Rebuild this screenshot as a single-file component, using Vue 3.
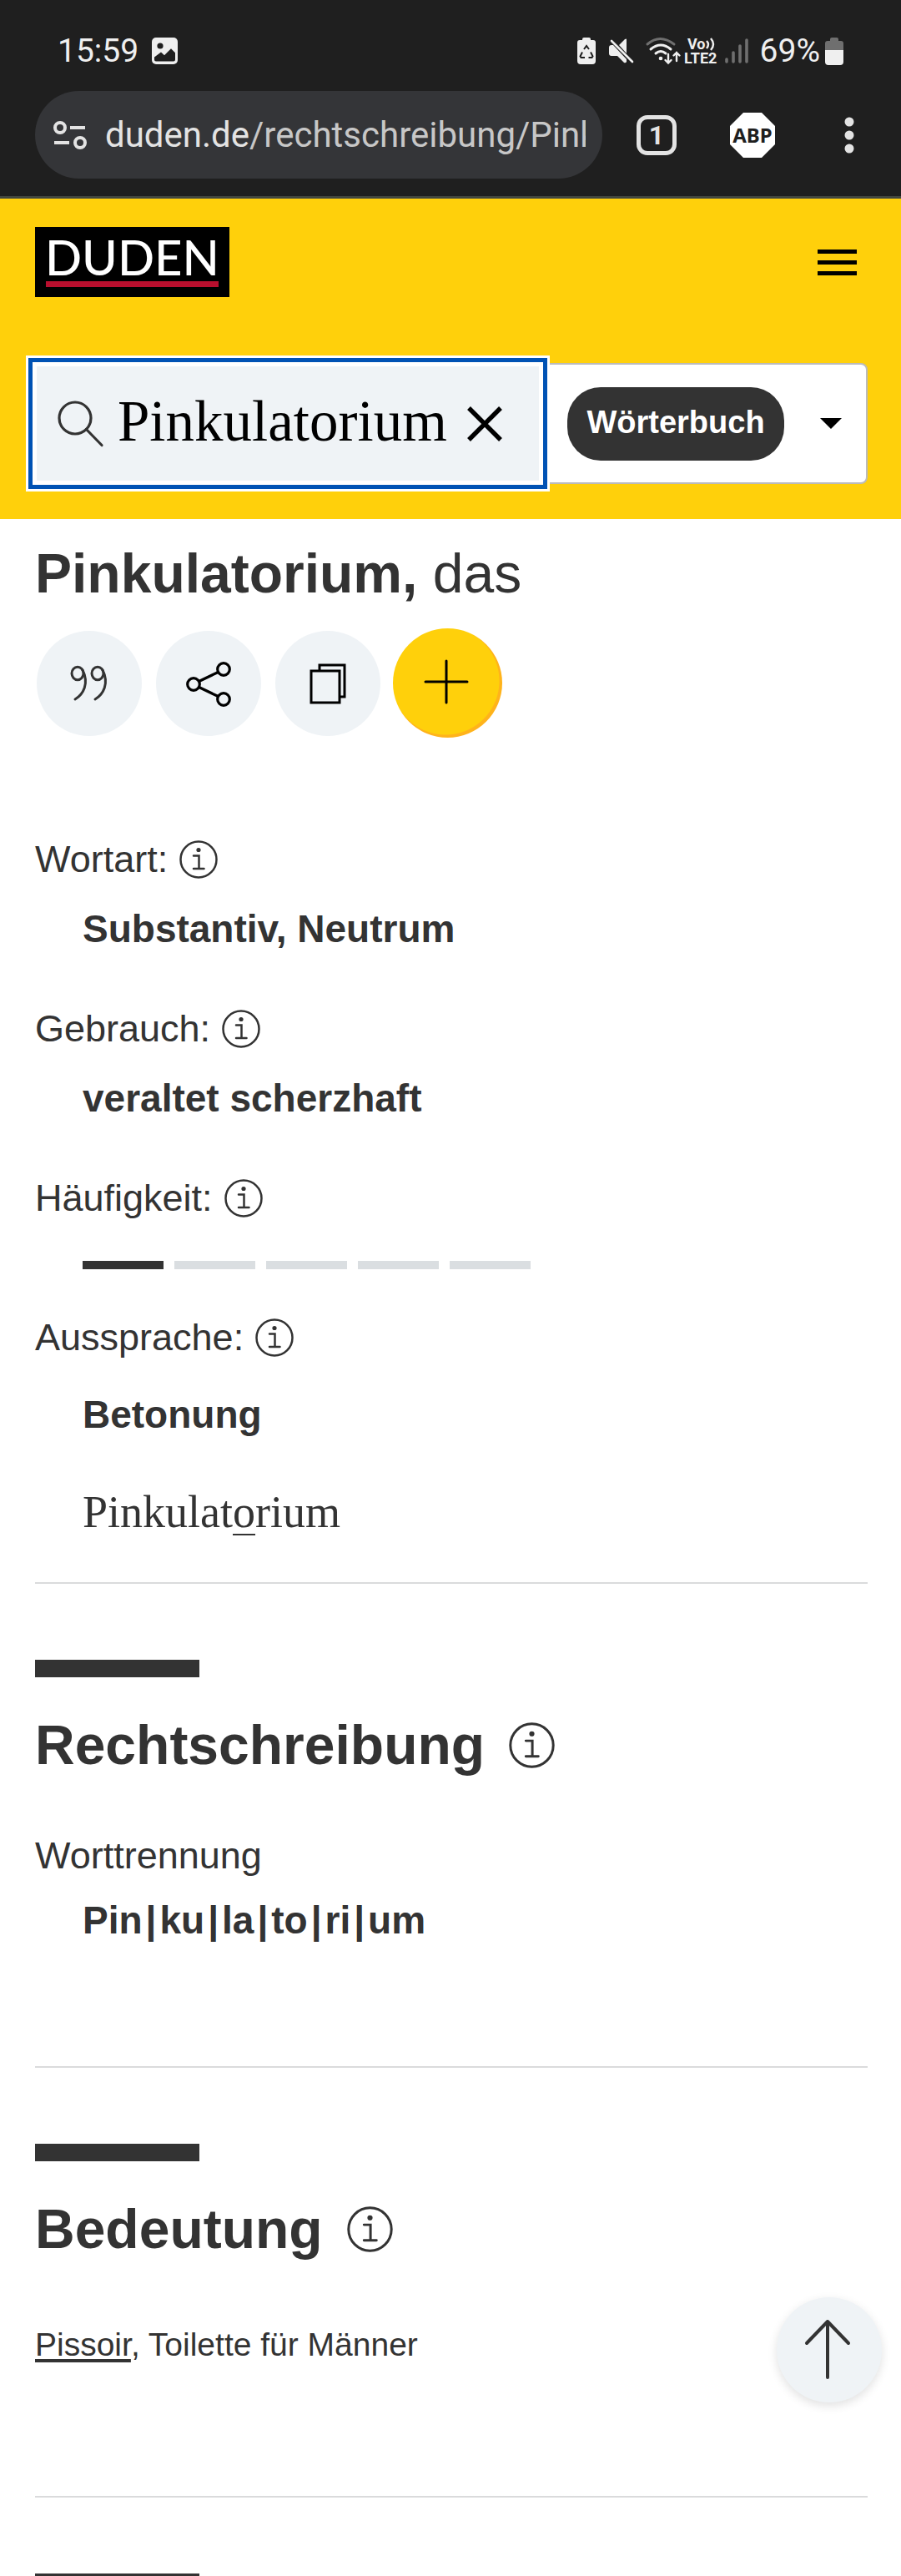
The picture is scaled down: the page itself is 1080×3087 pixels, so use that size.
<script setup>
import { ref } from 'vue'

const query = ref('Pinkulatorium')
const syllables = ['Pin', 'ku', 'la', 'to', 'ri', 'um']
const frequency = 1
</script>

<template>
  <div class="screen">
    <div class="chrome">
      <div class="status">
        <span class="clock">15:59</span>
        <svg class="photo" width="31" height="32" viewBox="0 0 31 32">
          <rect width="31" height="32" rx="5" fill="#efefef" />
          <circle cx="10" cy="10" r="3.6" fill="#1f1f1f" />
          <path d="M3 23.5l8-6 4 3.8 8-8 5 5v8.2q0 2-2 2H5q-2 0-2-2z" fill="#1f1f1f" />
        </svg>
        <div class="indicators">
          <svg width="22" height="32" viewBox="0 0 22 32">
            <path d="M6 3V2q0-2 2-2h6q2 0 2 2v1h3q3 0 3 3v22q0 4-4 4H4q-4 0-4-4V6q0-3 3-3z" fill="#efefef" />
            <path d="M8 14l3-4 3 4M16 17.500l2.500 5-1 1.500H13.500M9 24H4.500l-1-1.500 2.500-5" fill="none" stroke="#1f1f1f" stroke-width="2" />
          </svg>
          <svg class="mute" width="30" height="30" viewBox="0 0 30 30">
            <path d="M0 11q0-3 3-3h2l16 17v3q-1 2-3 1l-8-8H3q-3 0-3-3zM12 8l7-7q2-1 2 0v17z" fill="#efefef" />
            <path d="M3 3l25 25" stroke="#efefef" stroke-width="2.600" stroke-linecap="round" />
          </svg>
          <svg class="wifi" width="42" height="32" viewBox="0 0 42 32" fill="none" stroke-linecap="round">
            <path d="M2 8q15-13 32 0" stroke="#6f6f6f" stroke-width="3" />
            <path d="M6 14q12-10 24 0M12 19q6-5 12 0" stroke="#efefef" stroke-width="3" />
            <circle cx="18" cy="25" r="2.300" fill="#efefef" />
            <path d="M27 20v10M23.500 27l3.500 3.500 3.500-3.500M37 28V18M33.500 21.500L37 18l3.500 3.500" stroke="#efefef" stroke-width="2.400" />
          </svg>
          <svg class="volte" width="41" height="32" viewBox="0 0 41 32">
            <text x="4" y="14" class="tiny">Vo</text>
            <text x="0" y="31" class="tiny">LTE2</text>
            <path d="M27 4q4 4 0 9M32 1q6 7 0 14" fill="none" stroke="#efefef" stroke-width="2.400" />
          </svg>
          <svg class="signal" width="28" height="30" viewBox="0 0 28 30" stroke="#6f6f6f" stroke-width="3.600" stroke-linecap="round">
            <path d="M2 25v3M10 17v11M18 9v19M26 2v26" />
          </svg>
          <span class="percent">69%</span>
          <svg class="battery" width="22" height="33" viewBox="0 0 22 33">
            <path d="M6 4V2q0-2 2-2h6q2 0 2 2v2h3q3 0 3 3v9H0V7q0-3 3-3z" fill="#6f6f6f" />
            <path d="M0 15h22v14q0 4-4 4H4q-4 0-4-4z" fill="#efefef" />
          </svg>
        </div>
      </div>

      <div class="toolbar">
        <button class="address" type="button">
          <svg width="40" height="34" viewBox="0 0 40 34" fill="none" stroke="#e3e3e3" stroke-width="4">
            <circle cx="8" cy="8" r="6" />
            <circle cx="32" cy="26" r="6" />
            <path d="M20 8h18M1 26h18" />
          </svg>
          <span class="url"><b>duden.de</b>/rechtschreibung/Pink</span>
        </button>
        <button class="tabs" type="button" aria-label="Tabs">1</button>
        <button class="plain abp" type="button" aria-label="Adblock Plus">
          <svg width="54" height="54" viewBox="0 0 54 54">
            <path d="M16 0h22l16 16v22L38 54H16L0 38V16z" fill="#fff" />
            <text x="27" y="36" text-anchor="middle" class="abp-text">ABP</text>
          </svg>
        </button>
        <button class="plain more" type="button" aria-label="Menü">
          <svg width="12" height="44" viewBox="0 0 12 44" fill="#e3e3e3">
            <circle cx="6" cy="6" r="5.500" />
            <circle cx="6" cy="22" r="5.500" />
            <circle cx="6" cy="38" r="5.500" />
          </svg>
        </button>
      </div>
    </div>

    <header class="site-header">
      <div class="brand-row">
        <a class="logo" href="#">DUDEN</a>
        <button class="plain" type="button" aria-label="Navigation">
          <svg width="47" height="31" viewBox="0 0 47 31" fill="#000">
            <path d="M0 0h47v5H0zM0 13h47v5H0zM0 26h47v5H0z" />
          </svg>
        </button>
      </div>
      <form class="search" @submit.prevent>
        <div class="search-box">
          <svg class="lens" width="56" height="56" viewBox="0 0 56 56" fill="none" stroke="#333" stroke-width="3.200" stroke-linecap="round">
            <circle cx="21" cy="21" r="19" />
            <path d="M34.500 34.500L53 53.500" />
          </svg>
          <input v-model="query" type="text" aria-label="Suche">
          <button class="plain" type="button" aria-label="Löschen" @click="query = ''">
            <svg width="42" height="42" viewBox="0 0 42 42" stroke="#000" stroke-width="5.500">
              <path d="M2 2l38 38M40 2L2 40" />
            </svg>
          </button>
        </div>
        <label class="source">
          <select aria-label="Bereich"><option>Wörterbuch</option></select>
          <svg width="26" height="13" viewBox="0 0 26 13"><path d="M0 0h26L13 13z" /></svg>
        </label>
      </form>
    </header>

    <main>
      <h1>Pinkulatorium, <span>das</span></h1>
      <div class="actions">
        <button class="round" type="button" aria-label="Zitieren">
          <svg width="46" height="44" viewBox="0 0 46 44" fill="none" stroke="#333" stroke-width="3" stroke-linecap="round">
            <ellipse cx="9" cy="10" rx="7" ry="7.700" />
            <path d="M15 6c8 16 1 29-9 35" />
            <ellipse cx="33" cy="10" rx="7" ry="7.700" />
            <path d="M39 6c8 16 1 29-9 35" />
          </svg>
        </button>
        <button class="round" type="button" aria-label="Teilen">
          <svg width="54" height="54" viewBox="0 0 54 54" fill="none" stroke="#000" stroke-width="3.200">
            <circle cx="9" cy="28" r="7.300" />
            <circle cx="45" cy="10" r="7.300" />
            <circle cx="45" cy="46" r="7.300" />
            <path d="M15.500 24.500L38.500 13.500M15.500 31.500L38.500 42.500" />
          </svg>
        </button>
        <button class="round" type="button" aria-label="Kopieren">
          <svg width="44" height="50" viewBox="0 0 44 50" fill="none" stroke="#000" stroke-width="3">
            <path d="M2 10h34v38H2zM12 10V3h30v38h-6" />
          </svg>
        </button>
        <button class="round add" type="button" aria-label="Hinzufügen">
          <svg width="54" height="54" viewBox="0 0 54 54" stroke="#000" stroke-width="3" stroke-linecap="round">
            <path d="M27 2v50M2 27h50" />
          </svg>
        </button>
      </div>

      <dl>
        <dt>Wortart: <svg class="info" viewBox="0 0 46 46"><use href="#info" /></svg></dt>
        <dd>Substantiv, Neutrum</dd>
        <dt>Gebrauch: <svg class="info" viewBox="0 0 46 46"><use href="#info" /></svg></dt>
        <dd>veraltet scherzhaft</dd>
        <dt>Häufigkeit: <svg class="info" viewBox="0 0 46 46"><use href="#info" /></svg></dt>
        <dd class="frequency"><i v-for="n in 5" :key="n" :class="{ on: n <= frequency }"></i></dd>
        <dt>Aussprache: <svg class="info" viewBox="0 0 46 46"><use href="#info" /></svg></dt>
        <dd class="stress">Betonung</dd>
        <dd class="phonetic">Pinkulat<u>o</u>rium</dd>
      </dl>

      <section>
        <h2>Rechtschreibung <svg class="info" viewBox="0 0 46 46"><use href="#info" /></svg></h2>
        <dl class="hyphenation">
          <dt>Worttrennung</dt>
          <dd><template v-for="(s, i) in syllables" :key="s"><span v-if="i" class="sep">|</span>{{ s }}</template></dd>
        </dl>
      </section>

      <section>
        <h2>Bedeutung <svg class="info" viewBox="0 0 46 46"><use href="#info" /></svg></h2>
        <p><a href="#">Pissoir</a>, Toilette für Männer</p>
      </section>

      <section></section>
    </main>

    <button class="round to-top" type="button" aria-label="Nach oben">
      <svg width="54" height="72" viewBox="0 0 54 72" fill="none" stroke="#333" stroke-width="4" stroke-linecap="round" stroke-linejoin="round">
        <path d="M27 69V2M2 28L27 2l25 26" />
      </svg>
    </button>

    <svg width="0" height="0" class="defs">
      <symbol id="info" viewBox="0 0 46 46">
        <g fill="none" stroke="#333" stroke-width="2.500" stroke-linecap="round">
          <circle cx="23" cy="23" r="21.500" />
          <path d="M17 18.500h6.500V34M17 34h12.500" />
        </g>
        <circle cx="23" cy="11.500" r="2.600" fill="#333" />
      </symbol>
    </svg>
  </div>
</template>

<style>
body {
  background: #fff;
}
</style>

<style scoped>
.screen {
  max-height: 100vh;
  overflow: hidden;
  color: #333;
  font-family: "Liberation Sans", Arial, sans-serif;
}
button {
  box-sizing: border-box;
  padding: 0;
  border: 0;
  font: inherit;
  cursor: pointer;
}
svg {
  display: block;
  flex: none;
  overflow: visible;
}
.plain {
  background: none;
}
.defs {
  position: absolute;
}

/* Browser chrome */
.chrome {
  padding: 38px 0 21px;
  background: #1f1f1f;
  border-bottom: 3px solid #43473f;
  color: #efefef;
  font-family: Roboto, sans-serif;
}
.status {
  display: flex;
  align-items: center;
  height: 46px;
  padding: 0 69px;
}
.clock,
.percent {
  font-size: 39px;
  line-height: 46px;
}
.photo {
  margin-left: 16px;
}
.indicators {
  display: flex;
  align-items: center;
  margin-left: auto;
}
.mute {
  margin-left: 16px;
}
.wifi {
  margin-left: 14px;
}
.volte {
  margin-left: 4px;
}
.tiny {
  fill: #efefef;
  font: 700 18px Roboto, sans-serif;
}
.signal {
  margin-left: 8px;
}
.percent {
  margin-left: 14px;
}
.battery {
  margin-left: 6px;
}
.toolbar {
  display: flex;
  align-items: center;
  margin-top: 25px;
  padding: 0 56px 0 42px;
}
.address {
  display: flex;
  flex: 1;
  align-items: center;
  gap: 22px;
  min-width: 0;
  height: 105px;
  padding: 0 20px 0 22px;
  border-radius: 53px;
  background: #343538;
}
.url {
  overflow: hidden;
  color: #c7c7c7;
  font-size: 42px;
  line-height: 56px;
  white-space: nowrap;
}
.url b {
  color: #e3e3e3;
  font-weight: 400;
}
.tabs {
  width: 48px;
  height: 48px;
  margin-left: 41px;
  border: 5px solid #e3e3e3;
  border-radius: 13px;
  background: none;
  color: #e3e3e3;
  font-size: 32px;
  font-weight: 700;
  line-height: 38px;
}
.abp {
  margin-left: 64px;
}
.abp-text {
  fill: #1f1f1f;
  font: 700 24px "Noto Sans", sans-serif;
}
.more {
  margin-left: 83px;
}

/* Site header */
.site-header {
  padding: 34px 40px 42px;
  background: #ffd00b;
}
.brand-row {
  display: flex;
  align-items: center;
  justify-content: space-between;
  padding: 0 13px 0 2px;
}
.logo {
  box-sizing: border-box;
  height: 84px;
  padding: 6px 12px 12px;
  background: linear-gradient(#b80f2e, #b80f2e) 13px 65px / calc(100% - 26px) 7px no-repeat #000;
  color: #fff;
  font: 500 58px/60px Lato, sans-serif;
  text-decoration: none;
}
.search {
  display: flex;
  margin-top: 79px;
  padding: 2px;
  border: 2px solid #bbb;
  border-radius: 8px;
  background: #fff;
}
.search-box {
  display: flex;
  flex: 1;
  align-items: center;
  min-width: 0;
  height: 137px;
  padding: 0 44px 0 25px;
  box-sizing: border-box;
  background: #eff3f6;
  box-shadow: 0 0 0 5px #fff, 0 0 0 10px #0052b4, 0 0 0 13px #fff;
}
.search-box input {
  box-sizing: border-box;
  flex: 1;
  min-width: 0;
  height: 80px;
  padding: 0 0 4px 16px;
  border: 0;
  outline: 0;
  background: none;
  color: #000;
  font: 69px "Liberation Serif", serif;
}
.source {
  display: flex;
  align-items: center;
  padding: 0 27px 0 34px;
}
.source select {
  width: 260px;
  height: 88px;
  margin-right: 43px;
  padding: 0 0 4px;
  border: 0;
  border-radius: 40px;
  appearance: none;
  background: #333;
  color: #fff;
  font: 700 38px "Liberation Sans", Arial, sans-serif;
  text-align: center;
  text-align-last: center;
}

/* Entry */
main {
  padding: 25px 40px 0 42px;
}
h1,
h2 {
  margin: 0;
  font-size: 66px;
  line-height: 80px;
}
h1 span {
  font-weight: 400;
}
.actions {
  display: flex;
  align-items: center;
  gap: 17px;
  height: 131px;
  margin: 26px 2px 119px;
}
.round {
  display: flex;
  align-items: center;
  justify-content: center;
  width: 126px;
  height: 126px;
  border-radius: 50%;
  background: #eff3f6;
}
.add {
  width: 131px;
  height: 131px;
  margin-left: -2px;
  padding: 0 4px 4px 0;
  background: radial-gradient(circle at 63px 63px, #ffd00b 64px, #ffb31b 65px);
}
dl,
dd,
p {
  margin: 0;
}
dt,
dd {
  font-size: 45px;
  line-height: 54px;
}
dt {
  display: flex;
  align-items: center;
  gap: 14px;
}
dd {
  margin: 29px 0 66px 57px;
  font-size: 46px;
  font-weight: 700;
}
.info {
  width: 46px;
  height: 46px;
}
.frequency {
  display: flex;
  gap: 13px;
  margin: 48px 0 55px 57px;
}
.frequency i {
  width: 97px;
  height: 10px;
  background: #dadee1;
}
.frequency .on {
  background: #333;
}
.stress {
  margin: 38px 0 58px 57px;
}
.phonetic {
  margin: 0 0 52px 57px;
  font: 54px/64px "Liberation Serif", serif;
}
.phonetic u {
  text-decoration-thickness: 2px;
  text-underline-offset: 8px;
}
section {
  border-top: 2px solid #dadbdc;
}
section::before {
  display: block;
  width: 197px;
  height: 21px;
  margin: 91px 0 41px;
  background: #333;
  content: "";
}
h2 {
  display: flex;
  align-items: center;
  gap: 29px;
}
h2 .info {
  width: 55px;
  height: 55px;
}
.hyphenation {
  padding: 66px 0 148px;
}
.hyphenation dd {
  margin: 23px 0 0 57px;
}
.sep {
  padding: 0 4px;
}
p {
  padding: 72px 0 154px;
  font-size: 39px;
  line-height: 54px;
}
p a {
  color: inherit;
  text-decoration-thickness: 4px;
  text-underline-offset: 4px;
}
.to-top {
  position: fixed;
  right: 23px;
  bottom: 208px;
  padding-right: 4px;
  box-shadow: 0 4px 12px rgba(0, 0, 0, 0.12);
}
</style>
